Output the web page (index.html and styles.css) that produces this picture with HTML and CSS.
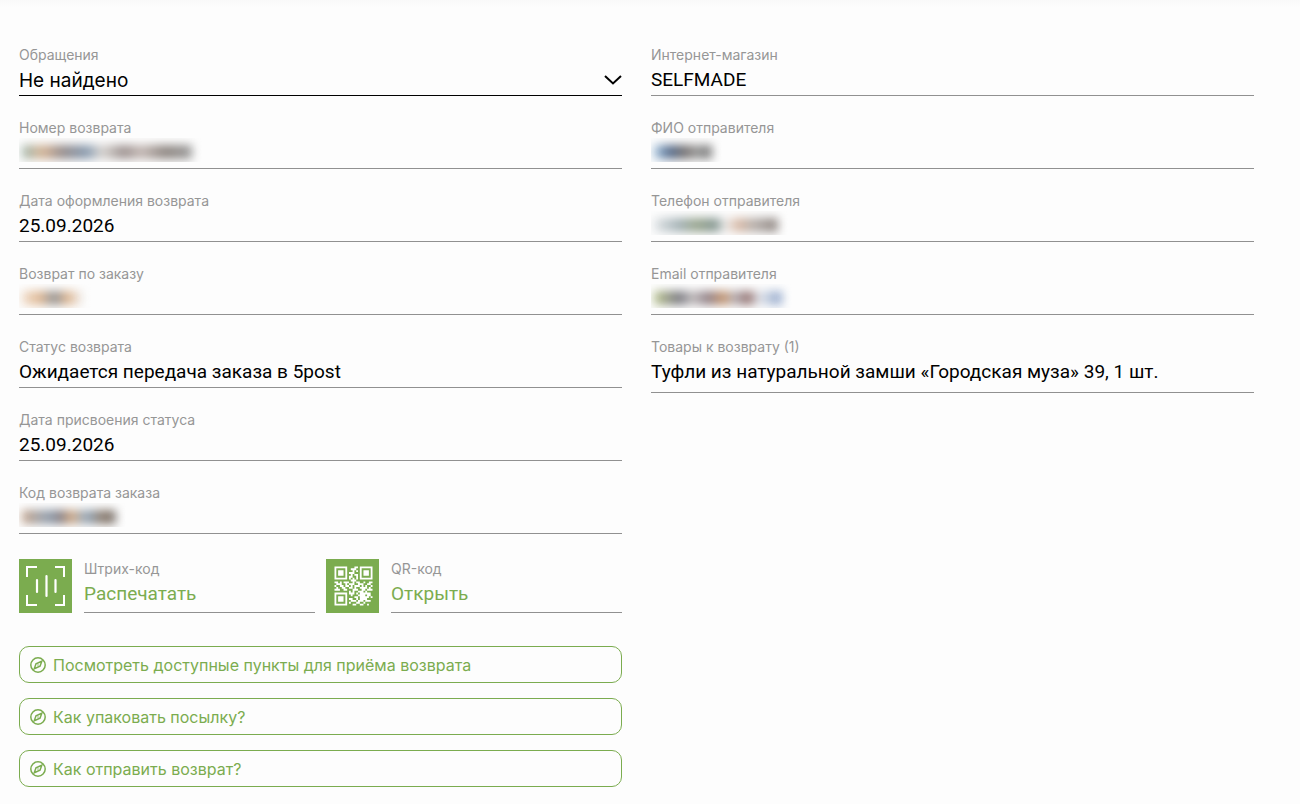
FILE: index.html
```html
<!DOCTYPE html>
<html lang="ru">
<head>
<meta charset="utf-8">
<meta name="viewport" content="width=device-width, initial-scale=1">
<title>Возврат</title>
<link rel="stylesheet" href="styles.css">
</head>
<body>
<main class="return">
  <section class="column">
    <div class="field field-select">
      <label class="label" for="appeals">Обращения</label>
      <div class="select-wrap">
        <select class="select" id="appeals"><option>Не найдено</option></select>
        <svg class="chevron" viewBox="0 0 18 12" aria-hidden="true"><path d="M1 2l8 7.500 8-7.500"/></svg>
      </div>
    </div>
    <div class="field"><span class="label">Номер возврата</span><div class="value"><span class="hidden-value hv-number"></span></div></div>
    <div class="field"><span class="label">Дата оформления возврата</span><div class="value">25.09.2026</div></div>
    <div class="field"><span class="label">Возврат по заказу</span><div class="value"><span class="hidden-value hv-order"></span></div></div>
    <div class="field"><span class="label">Статус возврата</span><div class="value">Ожидается передача заказа в 5post</div></div>
    <div class="field"><span class="label">Дата присвоения статуса</span><div class="value">25.09.2026</div></div>
    <div class="field"><span class="label">Код возврата заказа</span><div class="value"><span class="hidden-value hv-code"></span></div></div>

    <div class="codes">
      <div class="code">
        <svg class="code-icon" viewBox="0 0 53 54" aria-hidden="true">
          <g fill="none" stroke="#fff" stroke-width="2"><path d="M8 18V8h10M36 8h9v10M8 36v10h10M36 46h9V36"/><path d="M18 21v12M27.500 17v20M36.500 21v12" stroke-width="2.200" stroke-linecap="round"/></g>
        </svg>
        <div class="code-body"><span class="label" id="barcode-label">Штрих-код</span><a class="action" href="#" aria-describedby="barcode-label">Распечатать</a></div>
      </div>
      <div class="code">
        <svg class="code-icon" viewBox="0 0 53 54" aria-hidden="true">
          <g transform="translate(8.500 7.500) scale(1.810 1.860)" fill="none" stroke="#fff">
            <path d="M.5.5h6v6h-6zM14.500.5h6v6h-6zM.5 14.500h6v6h-6z"/>
            <path fill="#fff" stroke="none" d="M2 2h3v3H2zM16 2h3v3h-3zM2 16h3v3H2z"/>
            <path d="M11 .5h2M9 1.500h3M10 2.500h1M12 2.500h1M8 3.500h3M9 4.500h1M11 4.500h2M8 5.500h2M12 5.500h1M8 6.500h1M10 6.500h1M12 6.500h1M9 7.500h3M0 8.500h2M3 8.500h1M5 8.500h3M10 8.500h1M12 8.500h2M16 8.500h1M19 8.500h2M1 9.500h3M6 9.500h1M8 9.500h3M13 9.500h3M18 9.500h2M0 10.500h1M3 10.500h2M6 10.500h2M9 10.500h1M11 10.500h3M15 10.500h1M17 10.500h1M20 10.500h1M1 11.500h1M4 11.500h2M8 11.500h2M11 11.500h1M14 11.500h4M19 11.500h1M0 12.500h3M5 12.500h2M10 12.500h3M15 12.500h2M18 12.500h3M8 13.500h1M10 13.500h1M13 13.500h3M17 13.500h1M8 14.500h3M12 14.500h1M14 14.500h6M9 15.500h1M13 15.500h4M18 15.500h2M11 16.500h2M14 16.500h5M20 16.500h1M8 17.500h2M12 17.500h1M14 17.500h4M9 18.500h3M13 18.500h3M17 18.500h3M8 19.500h1M12 19.500h2M16 19.500h1M10 20.500h2M14 20.500h2M18 20.500h1"/>
          </g>
        </svg>
        <div class="code-body"><span class="label" id="qr-label">QR-код</span><a class="action" href="#" aria-describedby="qr-label">Открыть</a></div>
      </div>
    </div>

    <div class="help">
      <a class="help-link" href="#"><svg class="compass" viewBox="0 0 16 16" aria-hidden="true"><circle cx="8" cy="8" r="7.200"/><path d="M11.800 4.200L10 9.300 4.200 11.800 6 6.700z"/><circle class="dot" cx="8" cy="8" r=".7"/></svg>Посмотреть доступные пункты для приёма возврата</a>
      <a class="help-link" href="#"><svg class="compass" viewBox="0 0 16 16" aria-hidden="true"><circle cx="8" cy="8" r="7.200"/><path d="M11.800 4.200L10 9.300 4.200 11.800 6 6.700z"/><circle class="dot" cx="8" cy="8" r=".7"/></svg>Как упаковать посылку?</a>
      <a class="help-link" href="#"><svg class="compass" viewBox="0 0 16 16" aria-hidden="true"><circle cx="8" cy="8" r="7.200"/><path d="M11.800 4.200L10 9.300 4.200 11.800 6 6.700z"/><circle class="dot" cx="8" cy="8" r=".7"/></svg>Как отправить возврат?</a>
    </div>
  </section>

  <section class="column">
    <div class="field"><span class="label">Интернет-магазин</span><div class="value">SELFMADE</div></div>
    <div class="field"><span class="label">ФИО отправителя</span><div class="value"><span class="hidden-value hv-name"></span></div></div>
    <div class="field"><span class="label">Телефон отправителя</span><div class="value"><span class="hidden-value hv-phone"></span></div></div>
    <div class="field"><span class="label">Email отправителя</span><div class="value"><span class="hidden-value hv-email"></span></div></div>
    <div class="field field-goods"><span class="label">Товары к возврату (1)</span><div class="value">Туфли из натуральной замши «Городская муза» 39, 1 шт.</div></div>
  </section>
</main>
</body>
</html>
```
FILE: styles.css
```css
* { box-sizing: border-box; }

body {
  margin: 0;
  background: linear-gradient(#f9f9f9, #fdfdfd 8px) #fdfdfd no-repeat;
  color: #000;
  font-family: Roboto, "Liberation Sans", sans-serif;
  font-size: 19px;
}

.return {
  display: grid;
  grid-template-columns: 1fr 1fr;
  column-gap: 29px;
  align-items: start;
  padding: 45px 46px 16px 19px;
}

.column {
  display: flex;
  flex-direction: column;
  gap: 22px;
  min-width: 0;
}

.field { border-bottom: 1px solid #919191; }
.field-select { border-color: #000; }
.field-goods { padding-bottom: 5px; }

.label {
  display: block;
  color: #969696;
  font-family: Inter, "Liberation Sans", sans-serif;
  font-size: 14px;
  line-height: 20px;
}

.value {
  min-height: 30px;
  line-height: 30px;
}

.select-wrap {
  display: grid;
  align-items: center;
}

.select-wrap > * { grid-area: 1 / 1; }

.select {
  appearance: none;
  width: 100%;
  height: 30px;
  padding: 0;
  border: 0;
  background: none;
  color: #000;
  font-family: Inter, "Liberation Sans", sans-serif;
  font-size: 19px;
}

.chevron {
  justify-self: end;
  width: 18px;
  height: 12px;
  fill: none;
  stroke: #000;
  stroke-width: 2;
  pointer-events: none;
}

/* Personal data is masked with a soft colour smear */
.hidden-value {
  display: block;
  height: 24px;
  overflow: hidden;
}

.hidden-value::before {
  content: "";
  display: block;
  height: 14px;
  margin: 7px 0 0 3px;
  filter: blur(5px);
}

.hv-number::before { width: 170px; background: linear-gradient(90deg, #9fb8ae, #d5b394 12%, #928989 24%, #8498ae 38%, #d8d4d0 47%, #9a8f8d 60%, #c4b8b4 70%, #8d8580 84%, #999); }
.hv-order::before { width: 60px; background: linear-gradient(90deg, #f0ddca, #dfb792 30%, #8f9296 55%, #dfb48c 75%, #eee); }
.hv-code::before { width: 94px; background: linear-gradient(90deg, #c5a58c, #8f9dad 28%, #847c80 42%, #d4aa83 52%, #94a9bd 68%, #8c7b6c 86%, #7c7774); }
.hv-name::before { width: 58px; background: linear-gradient(90deg, #a9c9e4, #526889 28%, #77716e 55%, #999 72%, #777); }
.hv-phone::before { width: 124px; background: linear-gradient(90deg, #e2e5e7, #a3b1b6 20%, #99a68e 34%, #839591 50%, #eee 57%, #d8b8a4 68%, #b7b0ac 80%, #8e8581); }
.hv-email::before { width: 128px; background: linear-gradient(90deg, #bcc791, #77767f 20%, #c1bdbd 30%, #8f7f87 42%, #c8976e 55%, #b7b3b9 62%, #93706d 74%, #e3e6ec 82%, #8ba2c8); }

.codes {
  display: grid;
  grid-template-columns: 1fr 1fr;
  gap: 11px;
  margin-top: 3px;
}

.code {
  display: flex;
  gap: 12px;
}

.code-icon {
  flex: none;
  width: 53px;
  height: 54px;
  background: #7bac4f;
}

.code-body {
  flex: 1;
  border-bottom: 1px solid #919191;
}

.action {
  display: block;
  color: #7bac4f;
  line-height: 30px;
  text-decoration: none;
}

.help {
  display: flex;
  flex-direction: column;
  gap: 15px;
  margin-top: 11px;
}

.help-link {
  display: flex;
  align-items: center;
  gap: 7px;
  min-height: 37px;
  padding: 0 10px;
  border: 1px solid #7bac4f;
  border-radius: 10px;
  color: #7bac4f;
  font-family: Inter, "Liberation Sans", sans-serif;
  font-size: 16px;
  line-height: 24px;
  text-decoration: none;
}

.compass {
  flex: none;
  width: 16px;
  height: 16px;
  fill: none;
  stroke: #7bac4f;
  stroke-width: 1.5;
}

.dot { fill: #7bac4f; stroke: none; }
```
